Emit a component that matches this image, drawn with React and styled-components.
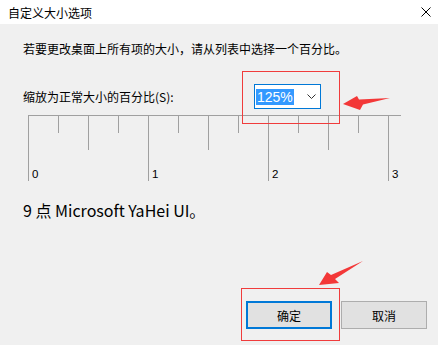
import styled, { createGlobalStyle } from "styled-components";

const GlobalStyle = createGlobalStyle`
  html, body {
    margin: 0;
    padding: 0;
    background: #f0f0f0;
  }
  body {
    font-family: "Noto Sans CJK SC", "Noto Sans", sans-serif;
  }
`;

const Dialog = styled.div`
  position: relative;
  width: 438px;
  height: 345px;
  display: flex;
  flex-direction: column;
  background: #f0f0f0;
  color: #000;
  overflow: hidden;
`;

const TitleBar = styled.div`
  height: 24px;
  flex: none;
  display: flex;
  align-items: center;
  justify-content: space-between;
  padding: 0 7px 0 8px;
  background: #fff;
  font-size: 12px;
`;

const Body = styled.div`
  flex: 1;
  display: flex;
  flex-direction: column;
  padding: 17px 11px 16px 23px;
`;

const Intro = styled.div`
  font-size: 12px;
  line-height: 16px;
`;

const ScaleRow = styled.div`
  display: flex;
  align-items: center;
  height: 25px;
  margin-top: 27px;
`;

const Label = styled.label`
  flex: 0 0 231px;
  font-size: 12px;
`;

const Marked = styled.div`
  position: relative;
`;

const Frame = styled.div`
  position: absolute;
  left: ${(p) => p.$left}px;
  top: ${(p) => p.$top}px;
  width: ${(p) => p.$w}px;
  height: ${(p) => p.$h}px;
  border: 1px solid #f03c3c;
  box-sizing: border-box;
  pointer-events: none;
`;

const Select = styled.div`
  width: 67px;
  height: 25px;
  box-sizing: border-box;
  border: 1px solid #0078d7;
  background: #fff;
  display: flex;
  align-items: center;
  padding: 0 4px 0 1px;
`;

const Selected = styled.span`
  background: #3399ff;
  color: #fff;
  font-family: "Liberation Sans", Arial, sans-serif;
  font-size: 14px;
  line-height: 16px;
  padding: 0 1px;
`;

const Chevron = styled.svg`
  margin-left: auto;
`;

const Ruler = styled.svg`
  display: block;
  margin: 6px 0 0 5px;
`;

const Sample = styled.div`
  margin-top: 18px;
  font-size: 16px;
  line-height: 20px;
`;

const Buttons = styled.div`
  margin-top: auto;
  display: flex;
  justify-content: flex-end;
  gap: 9px;
`;

const Button = styled.button`
  width: 86px;
  height: 28px;
  box-sizing: border-box;
  background: #e1e1e1;
  border: ${(p) => (p.$primary ? "2px solid #0078d7" : "1px solid #adadad")};
  font-family: inherit;
  font-size: 12px;
  color: #000;
  padding: 0;
`;

const Arrow = styled.svg`
  position: absolute;
  left: ${(p) => p.$x}px;
  top: ${(p) => p.$y}px;
`;

const ticks = Array.from({ length: 13 }, (_, i) => i);

function tickLength(i) {
  if (i % 4 === 0) return 66;
  if (i % 4 === 2) return 35;
  return 18;
}

export default function App() {
  return (
    <>
      <GlobalStyle />
      <Dialog>
        <TitleBar>
          <span>自定义大小选项</span>
          <svg width="10" height="10" viewBox="0 0 10 10">
            <path d="M0.5 0.5 L9.5 9.5 M9.5 0.5 L0.5 9.5" stroke="#000" strokeWidth="1" />
          </svg>
        </TitleBar>
        <Body>
          <Intro>若要更改桌面上所有项的大小，请从列表中选择一个百分比。</Intro>
          <ScaleRow>
            <Label>缩放为正常大小的百分比(S):</Label>
            <Marked>
              <Select>
                <Selected>125%</Selected>
                <Chevron width="9" height="5" viewBox="0 0 9 5">
                  <polyline points="0.5,0.5 4.5,4.5 8.5,0.5" fill="none" stroke="#333" strokeWidth="1" />
                </Chevron>
              </Select>
              <Frame $left={-12} $top={-13} $w={98} $h={53} />
            </Marked>
          </ScaleRow>
          <Ruler width="374" height="67" viewBox="0 0 374 67">
            <line x1="0" y1="0.5" x2="373" y2="0.5" stroke="#a0a0a0" />
            {ticks.map((i) => (
              <line
                key={i}
                x1={0.5 + i * 30}
                y1="0"
                x2={0.5 + i * 30}
                y2={tickLength(i)}
                stroke="#a0a0a0"
              />
            ))}
            {[0, 1, 2, 3].map((n) => (
              <text
                key={n}
                x={4 + n * 120}
                y="63"
                fontSize="11.5"
                fontFamily="Liberation Sans, Arial, sans-serif"
                fill="#000"
              >
                {n}
              </text>
            ))}
          </Ruler>
          <Sample>9 点 Microsoft YaHei UI。</Sample>
          <Buttons>
            <Marked>
              <Button $primary>确定</Button>
              <Frame $left={-5} $top={-13} $w={99} $h={53} />
            </Marked>
            <Button>取消</Button>
          </Buttons>
        </Body>
        <Arrow $x={340} $y={94} width="52" height="18" viewBox="0 0 52 18">
          <polygon points="3,10 17,2 19,5.5 50,4 23,10.5 20,16" fill="#f33838" />
        </Arrow>
        <Arrow $x={316} $y={258} width="50" height="30" viewBox="0 0 50 30">
          <polygon points="3,27 11,14 15,17 47,3 19,21 23,25" fill="#f33838" />
        </Arrow>
      </Dialog>
    </>
  );
}
